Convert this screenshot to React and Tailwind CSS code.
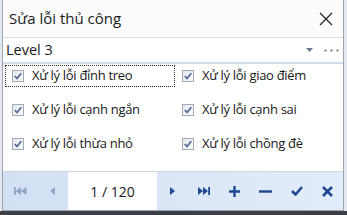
import React from 'react';

const items = [
  ['Xử lý lỗi đỉnh treo', 'Xử lý lỗi giao điểm'],
  ['Xử lý lỗi cạnh ngắn', 'Xử lý lỗi cạnh sai'],
  ['Xử lý lỗi thừa nhỏ', 'Xử lý lỗi chồng đè'],
];

function Check() {
  return (
    <span className="w-[12px] h-[12px] border border-[#a3abb8] bg-gradient-to-br from-[#e4e8ee] to-[#fafbfc] flex items-center justify-center shrink-0">
      <svg width="8" height="8" viewBox="0 0 8 8">
        <path d="M0.8 4 L3 6.5 L7.3 1.2" fill="none" stroke="#4d6796" strokeWidth="1.7" />
      </svg>
    </span>
  );
}

function Item({ label, focused }) {
  return (
    <div className={`flex items-center gap-[8px] h-[22px] pl-[7px] ${focused ? 'outline outline-1 outline-dotted outline-[#333] -outline-offset-1' : ''}`}>
      <Check />
      <span className="tracking-[-0.3px]">{label}</span>
    </div>
  );
}

const cell = 'w-[31px] h-full flex items-center justify-center shrink-0';

export default function App() {
  return (
    <div className="w-[347px] h-[215px] bg-[#e4e9f1] overflow-hidden flex flex-col" style={{ fontFamily: '"Open Sans", "Noto Sans", sans-serif' }}>
      <div className="ml-[2px] w-[342px] h-[211px] shrink-0 border-l border-r border-b border-[#9ea4ac] bg-white flex flex-col text-[#1a1a1a]">
        <div className="h-[38px] shrink-0 flex items-center justify-between pl-[6px] pr-[10px] bg-[#fcfcfc] border-b border-[#d6dce4]">
          <span className="text-[15px]">Sửa lỗi thủ công</span>
          <svg width="14" height="14" viewBox="0 0 14 14">
            <path d="M1 1 L13 13 M13 1 L1 13" stroke="#222" strokeWidth="1.2" />
          </svg>
        </div>
        <div className="h-[26px] shrink-0 flex items-center justify-between pl-[3px] pr-[4px] border-b-2 border-[#d5deea]">
          <span className="text-[14.5px]">Level 3</span>
          <div className="flex items-center gap-[11px]">
            <svg width="7" height="4" viewBox="0 0 7 4"><path d="M0 0 H7 L3.5 4 Z" fill="#6b7a90" /></svg>
            <svg width="15" height="3" viewBox="0 0 15 3">
              <circle cx="1.5" cy="1.5" r="1.1" fill="#666" />
              <circle cx="7.5" cy="1.5" r="1.1" fill="#666" />
              <circle cx="13.5" cy="1.5" r="1.1" fill="#666" />
            </svg>
          </div>
        </div>
        <div className="flex-1 grid grid-cols-[170px_1fr] content-start pt-[1px] pl-[2px] text-[13px] gap-y-[12px]">
          {items.map((row, i) => (
            <React.Fragment key={i}>
              <Item label={row[0]} focused={i === 0} />
              <Item label={row[1]} />
            </React.Fragment>
          ))}
        </div>
        <div className="h-[39px] shrink-0 flex items-stretch bg-gradient-to-r from-[#d2e0f4] to-[#e3ecf9] border-t border-[#cad7ea]">
          <div className="w-[34px] flex items-center justify-center shrink-0">
            <svg width="13" height="8" viewBox="0 0 13 8"><path d="M0 0 H1.8 V8 H0 Z M1.8 4 L7 0 V8 Z M7 4 L12.5 0 V8 Z" fill="#8ea4c4" /></svg>
          </div>
          <div className="w-[30px] flex items-center justify-center shrink-0">
            <svg width="5" height="8" viewBox="0 0 5 8"><path d="M5 0 V8 L0 4 Z" fill="#8ea4c4" /></svg>
          </div>
          <div className="w-[89px] ml-[1px] bg-white flex items-center justify-center text-[14px] shrink-0">1 / 120</div>
          <div className={cell}>
            <svg width="5" height="8" viewBox="0 0 5 8"><path d="M0 0 V8 L5 4 Z" fill="#1e4a94" /></svg>
          </div>
          <div className={cell}>
            <svg width="12" height="8" viewBox="0 0 12 8"><path d="M0 0 L5 4 L0 8 Z M5 0 L10 4 L5 8 Z M10.2 0 H12 V8 H10.2 Z" fill="#1e4a94" /></svg>
          </div>
          <div className={cell}>
            <svg width="11" height="11" viewBox="0 0 11 11"><path d="M5.5 0 V11 M0 5.5 H11" stroke="#1e4a94" strokeWidth="2.4" /></svg>
          </div>
          <div className={cell}>
            <svg width="13" height="3" viewBox="0 0 13 3"><path d="M0 1.5 H13" stroke="#1e4a94" strokeWidth="2.4" /></svg>
          </div>
          <div className={cell}>
            <svg width="12" height="10" viewBox="0 0 12 10"><path d="M1 5 L4.5 8.5 L11 1" fill="none" stroke="#1e4a94" strokeWidth="2.6" /></svg>
          </div>
          <div className={cell}>
            <svg width="11" height="11" viewBox="0 0 11 11"><path d="M1 1 L10 10 M10 1 L1 10" stroke="#1e4a94" strokeWidth="2.6" /></svg>
          </div>
        </div>
      </div>
      <div className="flex-1 bg-[#3b3e44]" />
    </div>
  );
}
